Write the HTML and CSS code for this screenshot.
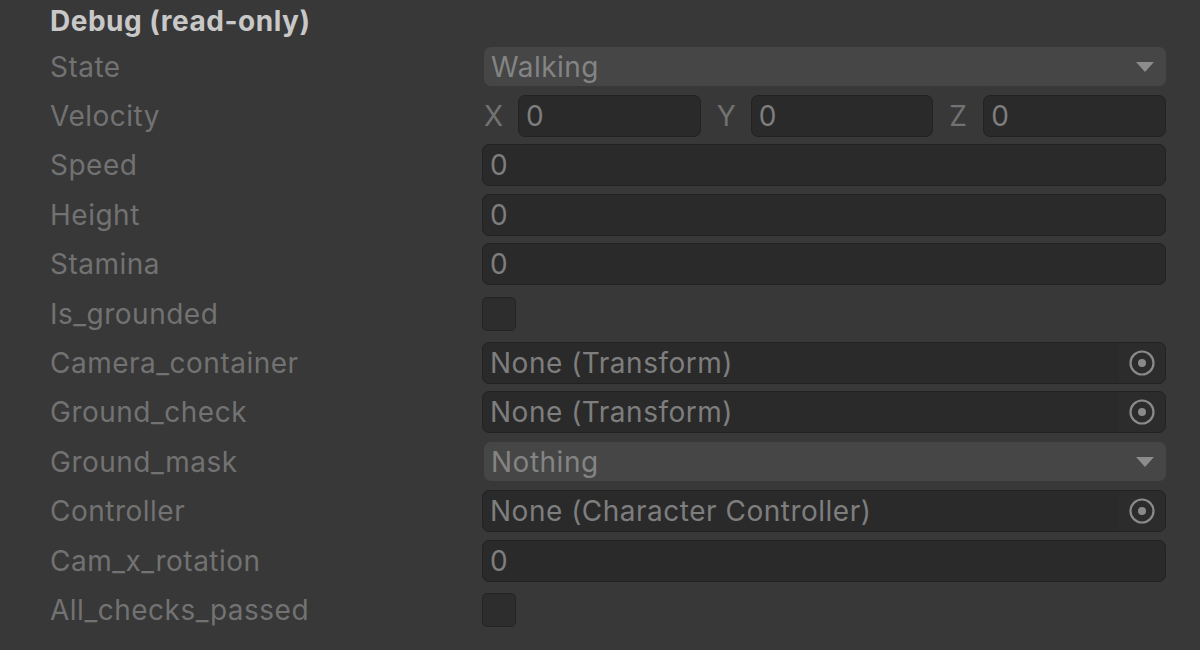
FILE: index.html
```html
<!DOCTYPE html>
<html>
<head>
<meta charset="utf-8">
<link rel="stylesheet" href="styles.css">
</head>
<body>
<div class="inspector">
  <div class="header">Debug (read-only)</div>

  <div class="row"><div class="label">State</div>
    <div class="dropdown"><span>Walking</span><span class="arrow"></span></div></div>

  <div class="row"><div class="label">Velocity</div>
    <div class="vector">
      <div class="comp"><span class="axis">X</span><div class="field">0</div></div>
      <div class="comp"><span class="axis">Y</span><div class="field">0</div></div>
      <div class="comp"><span class="axis">Z</span><div class="field">0</div></div>
    </div></div>

  <div class="row"><div class="label">Speed</div><div class="field">0</div></div>
  <div class="row"><div class="label">Height</div><div class="field">0</div></div>
  <div class="row"><div class="label">Stamina</div><div class="field">0</div></div>
  <div class="row"><div class="label">Is_grounded</div><div class="check"></div></div>

  <div class="row"><div class="label">Camera_container</div>
    <div class="field object"><span class="otext">None (Transform)</span><span class="picker"><svg width="28" height="28" viewBox="0 0 28 28"><circle cx="14" cy="14" r="11.5" fill="none" stroke="#8a8a8a" stroke-width="2.2"/><circle cx="14" cy="14" r="4" fill="#8a8a8a"/></svg></span></div></div>

  <div class="row"><div class="label">Ground_check</div>
    <div class="field object"><span class="otext">None (Transform)</span><span class="picker"><svg width="28" height="28" viewBox="0 0 28 28"><circle cx="14" cy="14" r="11.5" fill="none" stroke="#8a8a8a" stroke-width="2.2"/><circle cx="14" cy="14" r="4" fill="#8a8a8a"/></svg></span></div></div>

  <div class="row"><div class="label">Ground_mask</div>
    <div class="dropdown"><span>Nothing</span><span class="arrow"></span></div></div>

  <div class="row"><div class="label">Controller</div>
    <div class="field object"><span class="otext">None (Character Controller)</span><span class="picker"><svg width="28" height="28" viewBox="0 0 28 28"><circle cx="14" cy="14" r="11.5" fill="none" stroke="#8a8a8a" stroke-width="2.2"/><circle cx="14" cy="14" r="4" fill="#8a8a8a"/></svg></span></div></div>

  <div class="row"><div class="label">Cam_x_rotation</div><div class="field">0</div></div>
  <div class="row"><div class="label">All_checks_passed</div><div class="check"></div></div>
</div>
</body>
</html>
```

FILE: styles.css
```css
html, body {
  margin: 0;
  padding: 0;
  background: #383838;
}
body {
  font-family: Inter, "Noto Sans", "Liberation Sans", sans-serif;
  font-size: 28px;
  letter-spacing: 0.5px;
  width: 1200px;
  height: 650px;
  overflow: hidden;
}
.inspector {
  display: flex;
  flex-direction: column;
  padding: 0 34px 0 50px;
}
.header {
  height: 42px;
  display: flex;
  align-items: center;
  font-weight: 700;
  color: #c8c8c8;
}
.row {
  height: 49.4px;
  display: grid;
  grid-template-columns: 432px 1fr;
  align-items: center;
}
.label {
  color: #727272;
}
.field {
  height: 42px;
  box-sizing: border-box;
  background: #2a2a2a;
  border: 1.5px solid #222222;
  border-radius: 7px;
  padding-left: 7px;
  display: flex;
  align-items: center;
  color: #7e7e7e;
  min-width: 0;
}
.dropdown {
  height: 39px;
  margin: 0 0 0 2px;
  box-sizing: border-box;
  background: #464646;
  border-radius: 7px;
  padding: 0 12px 0 7px;
  display: flex;
  align-items: center;
  justify-content: space-between;
  color: #848484;
}
.arrow {
  width: 0;
  height: 0;
  border-left: 9px solid transparent;
  border-right: 9px solid transparent;
  border-top: 10px solid #8c8c8c;
}
.vector {
  display: grid;
  grid-template-columns: 1fr 1fr 1fr;
  column-gap: 14px;
}
.comp {
  display: grid;
  grid-template-columns: 36px 1fr;
  align-items: center;
}
.axis {
  color: #727272;
  padding-left: 2px;
}
.check {
  width: 34px;
  height: 34px;
  box-sizing: border-box;
  background: #2d2d2d;
  border: 1.5px solid #242424;
  border-radius: 5px;
}
.object {
  padding-right: 0;
  justify-content: space-between;
}
.otext {
  flex: 1;
}
.picker {
  width: 46px;
  height: 100%;
  display: flex;
  align-items: center;
  justify-content: center;
  background: #2c2c2c;
  border-radius: 0 6px 6px 0;
}
```
